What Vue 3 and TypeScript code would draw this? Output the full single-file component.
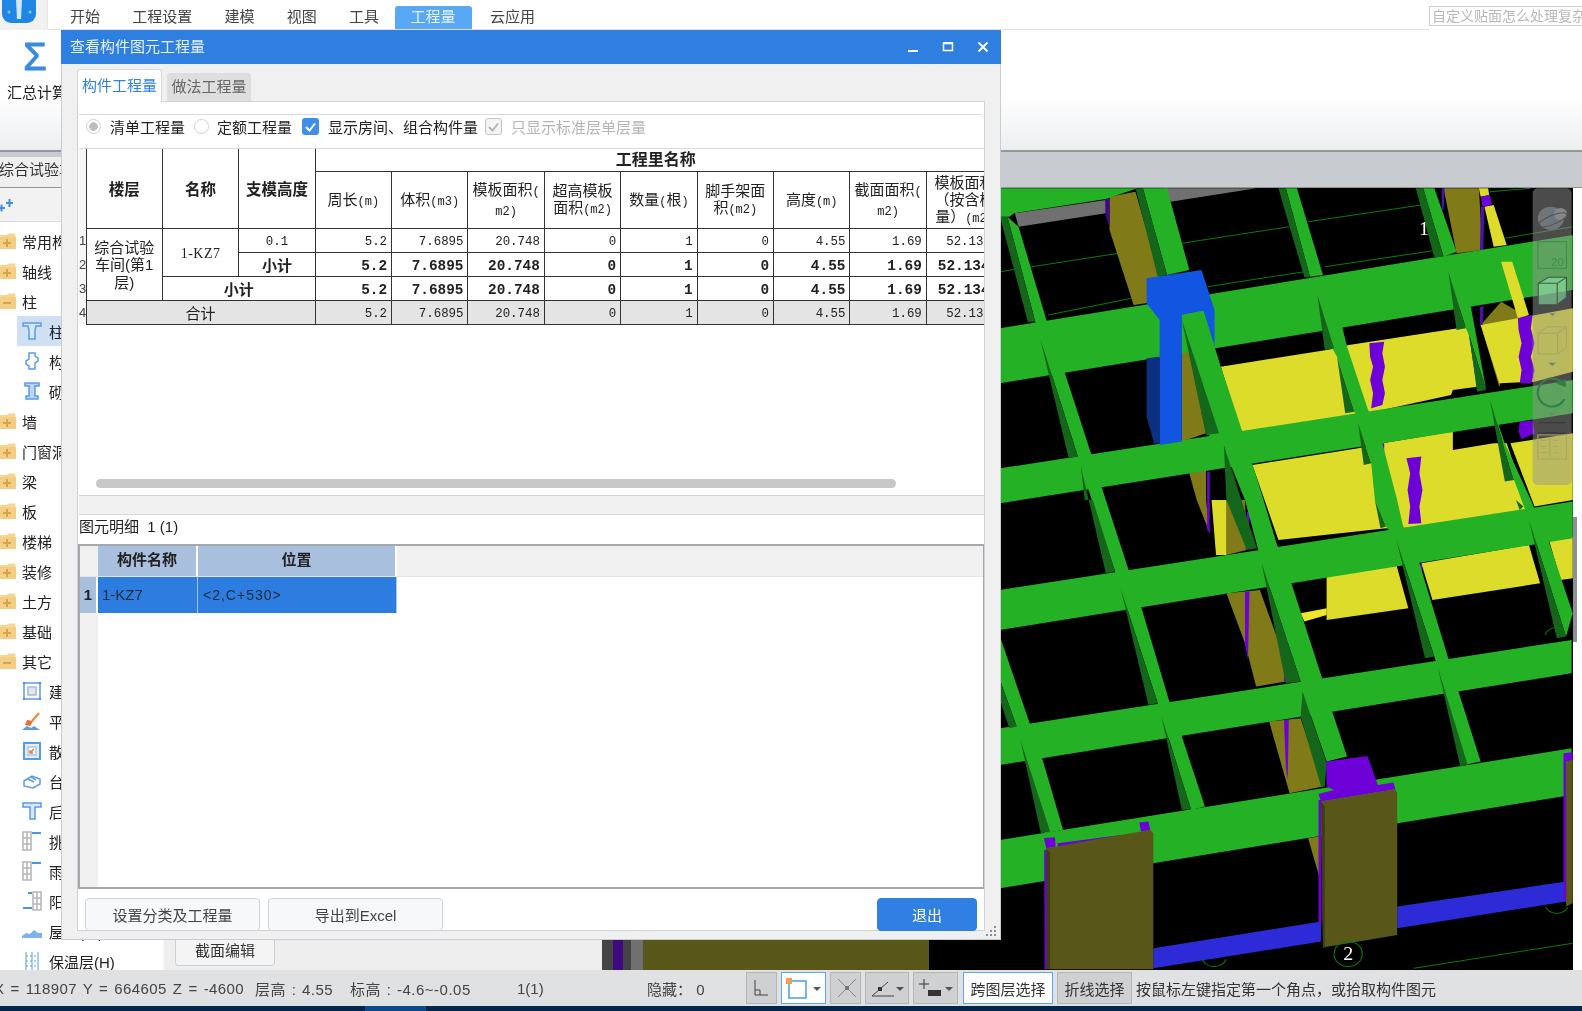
<script setup lang="ts">
type Row = { label: string; icon: string; child?: boolean; selected?: boolean }
type Poly = { fill: string; points: string }

const menus = ['开始', '工程设置', '建模', '视图', '工具', '工程量', '云应用']

const tree: Row[] = [
  { label: '常用构件类型', icon: 'plus' },
  { label: '轴线', icon: 'plus' },
  { label: '柱', icon: 'minus' },
  { label: '柱(Z)', icon: 'col', child: true, selected: true },
  { label: '构造柱(Z)', icon: 'gz', child: true },
  { label: '砌体柱(Z)', icon: 'qt', child: true },
  { label: '墙', icon: 'plus' },
  { label: '门窗洞', icon: 'plus' },
  { label: '梁', icon: 'plus' },
  { label: '板', icon: 'plus' },
  { label: '楼梯', icon: 'plus' },
  { label: '装修', icon: 'plus' },
  { label: '土方', icon: 'plus' },
  { label: '基础', icon: 'plus' },
  { label: '其它', icon: 'minus' },
  { label: '建筑面积(U)', icon: 'area', child: true },
  { label: '平整场地(V)', icon: 'shovel', child: true },
  { label: '散水(S)', icon: 'drain', child: true },
  { label: '台阶', icon: 'step', child: true },
  { label: '后浇带(JD)', icon: 'tee', child: true },
  { label: '挑檐(T)', icon: 'eave', child: true },
  { label: '雨蓬(P)', icon: 'eave', child: true },
  { label: '阳台(Y)', icon: 'balcony', child: true },
  { label: '屋面(W)', icon: 'roof', child: true },
  { label: '保温层(H)', icon: 'wall', child: true }
]

const subHeads = [
  ['周长(m)'],
  ['体积(m3)'],
  ['模板面积(', 'm2)'],
  ['超高模板', '面积(m2)'],
  ['数量(根)'],
  ['脚手架面', '积(m2)'],
  ['高度(m)'],
  ['截面面积(', 'm2)'],
  ['模板面积', '（按含模', '量）(m2)']
]
const values = ['5.2', '7.6895', '20.748', '0', '1', '0', '4.55', '1.69', '52.1344']

// latin parts of a header are drawn smaller than the chinese ones
const parts = (s: string) => s.split(/([()a-z0-9]+)/).filter(Boolean)
const isLatin = (s: string) => /^[()a-z0-9]+$/.test(s)

const GREEN = '#25b125'
const DARK = '#14661a'
const OLIVE = '#807a18'
const YELLOW = '#dedc2a'
const PURPLE = '#6e00d8'
const BROWN = '#59561a'

const p = (fill: string, points: string): Poly => ({ fill, points })

// model view, in a 2.694 x 3 scaled space (see the group transform)
const under: Poly[] = [
  p('#707070', '40,640 285,600 285,640 50,680'),
  p('#707070', '445,565 690,565 460,605'),
  p(OLIVE, '295,590 365,575 430,830 420,905 360,915 295,690'),
  p(OLIVE, '490,950 555,1300 490,1325'),
  p(OLIVE, '510,1420 555,1410 555,1500 565,1600 530,1500'),
  p(OLIVE, '1195,565 1290,565 1300,750 1230,760'),
  p(OLIVE, '1295,975 1350,905 1420,950 1345,1160'),
  p(OLIVE, '610,1500 660,1500 665,1650 610,1665'),
  p(OLIVE, '610,1780 700,1770 765,1970 770,2045 690,2060 660,1930'),
  p(OLIVE, '725,2165 810,2155 870,2360 780,2380'),
  p(OLIVE, '830,2515 860,2510 860,2630'),
  p(YELLOW, '595,1100 880,1050 905,1045 940,1035 1260,980 1285,1160 1220,1170 1215,1185 990,1240 650,1300'),
  p(YELLOW, '1295,975 1395,955 1440,1145 1345,1150'),
  p(YELLOW, '1395,955 1543,925 1543,1115 1440,1145'),
  p(YELLOW, '1305,620 1330,615 1365,735 1330,740'),
  p(YELLOW, '1290,565 1315,565 1318,585 1295,590'),
  p(YELLOW, '680,1395 965,1345 1030,1330 1220,1295 1220,1350 1330,1330 1365,1330 1425,1530 1090,1590 1040,1585 750,1620'),
  p(YELLOW, '1375,1330 1543,1300 1543,1500 1440,1520'),
  p(YELLOW, '570,1500 610,1500 610,1665 582,1665'),
  p(YELLOW, '880,1725 1068,1695 1100,1825 880,1860'),
  p(YELLOW, '1135,1690 1425,1635 1455,1750 1165,1800'),
  p(YELLOW, '1480,1625 1543,1610 1543,1735 1510,1740'),
  p('#efe62c', '810,1840 880,1825 880,1845 820,1865'),
  p('#3c0a88', '283,595 295,592 295,680 285,650'),
  p(PURPLE, '995,1030 1035,1025 1030,1060 1037,1100 1030,1140 1037,1180 1030,1215 1000,1225 1005,1180 997,1140 1005,1100 997,1070'),
  p(PURPLE, '1395,950 1435,945 1430,985 1440,1030 1430,1070 1440,1110 1432,1150 1400,1150 1405,1110 1397,1070 1405,1030 1397,990'),
  p(PURPLE, '1400,1265 1435,1262 1440,1300 1405,1318 1397,1295'),
  p(PURPLE, '1095,1375 1135,1370 1130,1420 1138,1470 1130,1520 1135,1570 1100,1572 1105,1520 1098,1470 1105,1420'),
  p(PURPLE, '1295,590 1320,585 1325,615 1300,620'),
  p('#4a12a8', '1295,620 1305,620 1302,750 1293,750'),
  p('#4a12a8', '1293,920 1303,918 1300,975 1293,975'),
  p('#4a12a8', '1190,565 1198,565 1195,630 1190,630'),
  p(PURPLE, '558,1175 585,1175 588,1190 565,1200 565,1300 557,1300'),
  p(PURPLE, '558,1415 565,1415 565,1600 558,1590'),
  p(PURPLE, '665,1535 692,1535 692,1555 672,1558 668,1650 662,1650'),
  p(PURPLE, '660,1775 672,1775 668,1980 660,1930'),
  p(PURPLE, '770,1900 798,1898 800,1918 775,1925 772,2045 765,2045'),
  p(PURPLE, '765,2160 778,2160 775,2340 770,2300'),
  p(PURPLE, '1025,1330 1035,1330 1035,1370 1028,1370'),
  p(PURPLE, '1128,1695 1137,1693 1137,1718 1130,1718')
]

const bands: Poly[] = [
  p(GREEN, '0,565 370,565 285,597 38,640 25,650 0,650'),
  p(GREEN, '0,985 1543,705 1543,870 0,1150'),
  p(GREEN, '0,1405 1543,1140 1543,1240 0,1510'),
  p(GREEN, '0,1770 1543,1505 1543,1615 0,1890'),
  p(GREEN, '0,2185 1540,1920 1540,2020 0,2295'),
  p(GREEN, '0,2520 1540,2245 1540,2385 0,2665')
]

const beams: Poly[] = [
  p(GREEN, '20,650 50,680 125,960 175,1120 245,1360 285,1500 345,1705 380,1820 455,2100 490,2210 552,2420 515,2430 425,2110 325,1765 310,1715 218,1400 210,1370 108,1015 95,965'),
  p(GREEN, '0,1910 80,2170 115,2280 170,2490 120,2500 55,2220 45,2180 0,2040'),
  p(GREEN, '385,565 450,565 510,810 450,825'),
  p(GREEN, '770,565 800,565 870,825 835,830'),
  p(GREEN, '855,885 900,880 935,1040 990,1225 1030,1330 1070,1500 1085,1575 1130,1690 1205,1965 1235,2075 1295,2285 1250,2295 1180,2005 1170,1970 1068,1620 1040,1580 1010,1500 1000,1390 965,1270 955,1235 908,1070 895,1045'),
  p(GREEN, '1140,565 1170,565 1230,755 1195,770'),
  p(GREEN, '1208,815 1250,810 1310,1170 1360,1330 1430,1500 1480,1630 1543,1840 1525,1910 1425,1560 1385,1440 1320,1200 1310,1170 1265,1010 1255,985'),
  p(DARK, '0,650 20,650 95,965 75,965'),
  p(DARK, '108,1015 210,1370 185,1375'),
  p(DARK, '218,1400 228,1500 250,1500 310,1715 285,1720'),
  p(DARK, '325,1765 425,2110 400,2115'),
  p(DARK, '435,2150 515,2428 490,2430'),
  p(DARK, '0,2040 45,2180 25,2185 0,2100'),
  p(DARK, '55,2220 135,2495 110,2500'),
  p(DARK, '365,565 385,565 450,825 425,830'),
  p(DARK, '750,565 770,565 835,830 820,832'),
  p(DARK, '855,885 900,1045 875,1050'),
  p(DARK, '908,1070 955,1235 930,1240'),
  p(DARK, '965,1270 1000,1390 980,1395'),
  p(DARK, '1010,1500 1040,1580 1025,1585'),
  p(DARK, '1068,1620 1170,1970 1145,1975'),
  p(DARK, '1180,2005 1260,2295 1240,2300'),
  p(DARK, '1120,565 1140,565 1195,770 1170,772'),
  p(DARK, '1208,815 1255,985 1230,990'),
  p(DARK, '1265,1010 1310,1170 1285,1175'),
  p(DARK, '1320,1200 1385,1440 1360,1445'),
  p(DARK, '1390,1500 1410,1520 1400,1530'),
  p(DARK, '1425,1560 1525,1910 1500,1915'),
  p(YELLOW, '1350,785 1380,785 1425,945 1395,955')
]

const front: Poly[] = [
  p('#0c2f80', '395,1075 430,1070 430,1330 415,1330 395,1250'),
  p('#1155e0', '395,835 543,810 578,930 578,1040 548,932 490,945 490,1325 430,1335 430,960 395,910'),
  p(GREEN, '490,945 548,932 595,1100 650,1285 710,1500 745,1630 785,1750 865,2025 895,2135 935,2270 880,2285 815,2075 810,2045 705,1690 660,1500 600,1335 555,1300 490,950'),
  p(DARK, '490,960 590,1300 555,1305'),
  p(DARK, '603,1335 692,1645 665,1650 610,1500'),
  p(DARK, '705,1690 810,2045 770,2050'),
  p(DARK, '815,2075 880,2290 875,2360 865,2360 810,2150'),
  p('#2d2bd8', '413,2845 865,2765 865,2825 413,2905'),
  p('#2d2bd8', '1070,2720 1525,2645 1525,2705 1070,2785'),
  p(PURPLE, '878,2285 990,2268 1018,2355 1060,2348 1065,2368 865,2405 858,2382 900,2370 880,2360'),
  p(PURPLE, '118,2515 148,2512 150,2540 125,2545'),
  p(PURPLE, '155,2530 325,2505 325,2525 158,2555'),
  p(PURPLE, '375,2468 400,2465 405,2490 380,2495'),
  p(PURPLE, '1518,2260 1543,2257 1543,2280 1525,2285 1525,2700 1518,2700'),
  p(PURPLE, '119,2550 128,2550 128,2908 120,2908'),
  p(PURPLE, '858,2400 866,2400 866,2770 858,2770'),
  p(BROWN, '125,2545 325,2505 405,2490 413,2500 413,2908 135,2908'),
  p('#3f3d14', '125,2545 135,2560 135,2908 125,2908'),
  p(BROWN, '865,2405 1065,2368 1070,2380 1070,2805 870,2843'),
  p('#3f3d14', '865,2405 875,2420 875,2842 870,2843'),
  p(BROWN, '1525,2285 1543,2280 1543,2710 1525,2720')
]

const greenLines = [
  '0,815 320,760', '130,945 355,895', '490,730 780,680', '560,860 820,815',
  '830,665 1135,615', '875,800 1180,750', '1360,715 1543,680', '1320,575 1430,565',
  '1115,2905 1543,2830'
]
</script>

<template>
  <div class="app">
    <header class="topbar">
      <div class="logo-cell">
        <svg class="logo" width="38" height="24" viewBox="0 0 38 24">
          <path d="M2 0h34v14a9 9 0 0 1-9 9H11a9 9 0 0 1-9-9z" fill="#1f86e6" />
          <path d="M16 0h6l-1 19h-4z" fill="#cfe6fb" />
          <circle cx="9" cy="12" r="1.5" fill="#8cc6f7" />
          <circle cx="30" cy="12" r="1.5" fill="#8cc6f7" />
        </svg>
      </div>
      <nav class="menu">
        <span v-for="m in menus" :key="m" class="menu-item" :class="{ active: m === '工程量' }">{{ m }}</span>
      </nav>
      <div class="search">自定义贴面怎么处理复杂</div>
    </header>

    <section class="ribbon">
      <div class="sum">
        <span class="sigma">Σ</span>
        <span class="sum-label">汇总计算</span>
      </div>
    </section>

    <section class="tabstrip">
      <span class="doc-tab">综合试验车间</span>
    </section>

    <main class="workspace">
      <aside class="side">
        <div class="side-tools">
          <svg width="18" height="14" viewBox="0 0 18 14">
            <path d="M0 10h7M3.500 6.500v7M8 5h7M11.500 1v8" stroke="#3f8fe0" stroke-width="2" />
          </svg>
        </div>
        <ul class="tree">
          <li v-for="r in tree" :key="r.label" class="tree-row" :class="{ child: r.child, selected: r.selected }">
            <svg v-if="!r.child" class="folder" width="18" height="18" viewBox="0 0 18 18">
              <path d="M-2 3h9l1.500-1.500h6a1 1 0 0 1 1 1V16H-2z" fill="#f6d693" />
              <path d="M-2 5h18v12H-2z" fill="#f3cf86" />
              <path d="M3 11h8" stroke="#dba14c" stroke-width="2" />
              <path v-if="r.icon === 'plus'" d="M7 7v8" stroke="#dba14c" stroke-width="2" />
            </svg>
            <svg v-else class="node" width="20" height="20" viewBox="0 0 20 20" fill="none" stroke="#5a9be6" stroke-width="1.500">
              <template v-if="r.icon === 'col'">
                <path d="M1 2h18v3h-5l-1 4v9H7V9L6 5H1z" fill="#d8e8fa" />
              </template>
              <template v-else-if="r.icon === 'gz'">
                <path d="M7 2h6v3l3 2v3l-3 2v6H7v-3L4 13v-3l3-2z" />
              </template>
              <template v-else-if="r.icon === 'qt'">
                <path d="M3 2h14v3h-4v10h3v3H4v-3h3V5H3z" fill="#bcd6f4" />
              </template>
              <template v-else-if="r.icon === 'area'">
                <path d="M2 2h16v16H2z" />
                <path d="M6 6h8v8H6z" fill="#dfe6f2" stroke="#a9b9d4" />
                <path d="M1 1h2v2H1zM17 1h2v2h-2zM1 17h2v2H1zM17 17h2v2h-2z" fill="#3f8fe0" stroke="none" />
              </template>
              <template v-else-if="r.icon === 'shovel'">
                <path d="M17 2l-7 8" stroke="#e88a3c" stroke-width="2" />
                <path d="M5 9l6 1-3 5-5-1z" fill="#e8702c" stroke="none" />
                <path d="M0 19l5-4 4 2 3-2 6 4z" fill="#5a9be6" stroke="none" />
              </template>
              <template v-else-if="r.icon === 'drain'">
                <path d="M2 2h16v16H2z" fill="#e4effb" stroke-width="2" />
                <path d="M6 6h8v8H6z" fill="#fff" stroke="#a9c6ea" />
                <path d="M12 8l-4 4M8 9v3h3" stroke="#e8803c" />
              </template>
              <template v-else-if="r.icon === 'step'">
                <path d="M2 10l8-5 8 3v5l-7 4-9-2z" />
                <path d="M6 8l6 3M9 6l5 3" />
              </template>
              <template v-else-if="r.icon === 'tee'">
                <path d="M1 2h18v4h-6v12H8V6H1z" fill="#d8e8fa" stroke-width="1.500" />
              </template>
              <template v-else-if="r.icon === 'eave'">
                <path d="M1 1h8v18H1zM1 7h8M1 13h8M5 1v18" stroke="#b5b5b5" />
                <path d="M10 2h9" stroke="#4c93e6" stroke-width="2" />
              </template>
              <template v-else-if="r.icon === 'balcony'">
                <path d="M11 1h8v18h-8zM11 7h8M11 13h8M15 1v18" stroke="#b5b5b5" />
                <path d="M1 17h9M6 2h4" stroke="#4c93e6" stroke-width="2" />
              </template>
              <template v-else-if="r.icon === 'roof'">
                <path d="M0 15l4-3 4 1 4-4 4 3 4 0v5H0z" fill="#7fb2ec" stroke="none" />
              </template>
              <template v-else>
                <path d="M4 1v18M10 1v18M16 1v18" stroke-width="1" />
                <path d="M4 5h12M4 10h12M4 15h12" stroke-width="1" stroke-dasharray="2 2" />
              </template>
            </svg>
            <span class="tree-label">{{ r.label }}</span>
          </li>
        </ul>
      </aside>

      <div class="middle">
        <div class="edit-tab">截面编辑</div>
      </div>

      <div class="canvas">
        <svg class="scene" width="971" height="782" viewBox="602 188 971 782">
          <rect x="602" y="188" width="971" height="782" fill="#000" />
          <rect x="602" y="940" width="11" height="30" fill="#444" />
          <rect x="613" y="940" width="10" height="30" fill="#3f0a80" />
          <rect x="623" y="940" width="8" height="30" fill="#444" />
          <rect x="631" y="940" width="12" height="30" fill="#707070" />
          <rect x="643" y="940" width="286" height="30" fill="#59561a" />
          <g transform="translate(1000 0) scale(0.3712 0.3333)">
            <polyline v-for="l in greenLines" :key="l" :points="l" stroke="#0a7a0a" stroke-width="3" fill="none" />
            <polygon v-for="(s, i) in under" :key="'u' + i" :points="s.points" :fill="s.fill" />
            <polygon v-for="(s, i) in bands" :key="'b' + i" :points="s.points" :fill="s.fill" />
            <polygon v-for="(s, i) in beams" :key="'m' + i" :points="s.points" :fill="s.fill" />
            <polygon v-for="(s, i) in front" :key="'f' + i" :points="s.points" :fill="s.fill" />
            <circle cx="938" cy="2862" r="38" stroke="#0a7a0a" stroke-width="3" fill="none" />
            <text x="938" y="2880" class="axis" text-anchor="middle">2</text>
            <text x="1142" y="705" class="axis" text-anchor="middle">1</text>
            <path d="M545 2878a34 34 0 0 0 64 0" stroke="#0a7a0a" stroke-width="3" fill="none" />
            <path d="M1470 2722a34 34 0 0 0 60 0" stroke="#0a7a0a" stroke-width="3" fill="none" />
            <path d="M1468 1905a32 32 0 0 1 50 -15" stroke="#0a7a0a" stroke-width="3" fill="none" />
            <!-- view tools floating over the model -->
            <rect x="1435" y="565" width="105" height="890" rx="14" fill="rgba(150,150,150,.5)" />
            <circle cx="1484" cy="655" r="35" fill="#70757a" />
            <circle cx="1510" cy="642" r="18" fill="#85888a" />
            <ellipse cx="1488" cy="660" rx="42" ry="13" transform="rotate(-25 1488 660)" fill="none" stroke="#505254" stroke-width="3" />
            <rect x="1449" y="725" width="77" height="80" fill="none" stroke="#3b8f50" stroke-width="3" />
            <text x="1502" y="798" class="axis-sm" text-anchor="middle">20</text>
            <path d="M1450 850l28-18h48v60l-25 22h-51z" fill="rgba(140,235,170,.55)" stroke="#40584a" stroke-width="3" />
            <path d="M1450 850h51v64M1501 850l25-18" fill="none" stroke="#40584a" stroke-width="3" />
            <path d="M1450 1000l24-20h52v62l-24 20h-52zM1450 1000h52v62M1502 1000l24-20" fill="none" stroke="#a8a860" stroke-width="3" />
            <path d="M1478 1088h20l-10 10zM1478 1238h20l-10 10zM1480 940h16l-8 8z" fill="#6a8a70" />
            <path d="M1515 1150A38 42 0 1 0 1520 1198" fill="none" stroke="#2f8048" stroke-width="6" />
            <path d="M1498 1150l26 -12v24z" fill="#2f8048" />
            <path d="M1450 1268h74M1450 1300h74" stroke="#3a3a3a" stroke-width="4" />
            <rect x="1449" y="1305" width="77" height="72" fill="none" stroke="#a8a860" stroke-width="3" />
            <path d="M1458 1322h14M1458 1340h14M1458 1358h14M1490 1322h14M1490 1340h14M1490 1358h14M1481 1312v60" stroke="#a8a860" stroke-width="3" fill="none" />
          </g>
        </svg>
      </div>

      <div class="rail">
        <div class="rail-thumb"></div>
      </div>
    </main>

    <footer class="status">
      <span class="st st-coord">X = 118907 Y = 664605 Z = -4600</span>
      <span class="st st-floor">层高 : 4.55</span>
      <span class="st st-level">标高 : -4.6~-0.05</span>
      <span class="st st-count">1(1)</span>
      <span class="st st-hide">隐藏： 0</span>
      <div class="tools">
        <button class="tool t1">
          <svg width="20" height="20" viewBox="0 0 20 20" fill="none" stroke="#444"><path d="M4 2v15h13" /><path d="M4 12h5v5" /></svg>
        </button>
        <button class="tool t2 on">
          <svg width="22" height="24" viewBox="0 0 22 24" fill="none"><path d="M3 5h17v17H3z" stroke="#4c9bf0" stroke-width="1.500" /><path d="M0 2h6v6H0z" fill="#f0a050" /></svg>
          <i class="caret"></i>
        </button>
        <button class="tool t3">
          <svg width="24" height="24" viewBox="0 0 24 24" fill="none" stroke="#888"><path d="M3 3l18 18M21 3L3 21" /><path d="M10 10h4v4h-4z" fill="#777" stroke="none" /></svg>
        </button>
        <button class="tool t4">
          <svg width="24" height="20" viewBox="0 0 24 20" fill="none" stroke="#444"><path d="M2 18h22M2 18L18 4" /><path d="M8 9h4v4H8z" fill="#333" stroke="none" /></svg>
          <i class="caret"></i>
        </button>
        <button class="tool t5">
          <svg width="24" height="22" viewBox="0 0 24 22" fill="none"><path d="M6 2v10M1 7h10" stroke="#333" /><path d="M10 13h13v6H10z" fill="#333" /></svg>
          <i class="caret"></i>
        </button>
        <button class="tool t6 on">跨图层选择</button>
        <button class="tool t7">折线选择</button>
      </div>
      <span class="st st-hint">按鼠标左键指定第一个角点，或拾取构件图元</span>
    </footer>
    <div class="taskbar"><i class="task-on"></i></div>

    <!-- floating window -->
    <div class="dialog">
      <div class="dlg-title">
        <span class="dlg-name">查看构件图元工程量</span>
        <div class="dlg-btns">
          <svg width="12" height="12" viewBox="0 0 12 12"><path d="M1 10h10" stroke="#fff" stroke-width="2" /></svg>
          <svg width="12" height="12" viewBox="0 0 12 12" fill="none"><path d="M1.500 2.500h9v7h-9z" stroke="#fff" stroke-width="1.500" /><path d="M1 2h10" stroke="#fff" stroke-width="2" /></svg>
          <svg width="12" height="12" viewBox="0 0 12 12"><path d="M1.500 1.500l9 9M10.500 1.500l-9 9" stroke="#fff" stroke-width="1.800" /></svg>
        </div>
      </div>

      <div class="dlg-tabs">
        <span class="dlg-tab active">构件工程量</span>
        <span class="dlg-tab">做法工程量</span>
      </div>

      <div class="dlg-panel">
        <div class="options">
          <span class="radio checked"></span><span class="opt opt1">清单工程量</span>
          <span class="radio"></span><span class="opt opt2">定额工程量</span>
          <span class="check"><svg width="17" height="17" viewBox="0 0 17 17"><path d="M4 9l3.500 3.500L13 5.500" stroke="#fff" stroke-width="2" fill="none" /></svg></span>
          <span class="opt opt3">显示房间、组合构件量</span>
          <span class="check off"><svg width="17" height="17" viewBox="0 0 17 17"><path d="M4 9l3.500 3.500L13 5.500" stroke="#b5b5b5" stroke-width="2" fill="none" /></svg></span>
          <span class="opt muted">只显示标准层单层量</span>
        </div>

        <div class="sum-grid">
          <table class="qty">
            <colgroup>
              <col class="c-no" />
              <col v-for="n in 12" :key="n" class="c-val" />
            </colgroup>
            <thead>
              <tr class="h1">
                <th class="no" rowspan="2"></th>
                <th rowspan="2">楼层</th>
                <th rowspan="2">名称</th>
                <th rowspan="2">支模高度</th>
                <th colspan="9" class="h-group"><span class="h-group-text">工程里名称</span></th>
              </tr>
              <tr class="h2">
                <th v-for="(h, i) in subHeads" :key="i" class="sub">
                  <template v-for="(line, j) in h" :key="j">
                    <br v-if="j" />
                    <span v-for="(t, k) in parts(line)" :key="k" :class="{ unit: isLatin(t) }">{{ t }}</span>
                  </template>
                </th>
              </tr>
            </thead>
            <tbody>
              <tr>
                <td class="no">1</td>
                <td rowspan="3" class="floor">综合试验<br />车间(第1<br />层)</td>
                <td rowspan="2" class="name">1-KZ7</td>
                <td class="mid mono">0.1</td>
                <td v-for="(v, i) in values" :key="i" class="num">{{ v }}</td>
              </tr>
              <tr class="bold">
                <td class="no">2</td>
                <td class="mid">小计</td>
                <td v-for="(v, i) in values" :key="i" class="num">{{ v }}</td>
              </tr>
              <tr class="bold">
                <td class="no">3</td>
                <td colspan="2" class="mid">小计</td>
                <td v-for="(v, i) in values" :key="i" class="num">{{ v }}</td>
              </tr>
              <tr class="total">
                <td class="no">4</td>
                <td colspan="3" class="mid">合计</td>
                <td v-for="(v, i) in values" :key="i" class="num">{{ v }}</td>
              </tr>
            </tbody>
          </table>
          <div class="hscroll"><div class="hscroll-thumb"></div></div>
        </div>

        <div class="gap"></div>

        <div class="detail">
          <div class="detail-title">图元明细&nbsp;&nbsp;1 (1)</div>
          <div class="detail-grid">
            <div class="dg-head">
              <span class="dg-corner"></span>
              <span class="dg-h w1">构件名称</span>
              <span class="dg-h w2">位置</span>
            </div>
            <div class="dg-row">
              <span class="dg-no">1</span>
              <span class="dg-c w1">1-KZ7</span>
              <span class="dg-c w2 pos">&lt;2,C+530&gt;</span>
            </div>
            <div class="dg-rest"></div>
          </div>
          <div class="actions">
            <button class="btn">设置分类及工程量</button>
            <button class="btn">导出到Excel</button>
            <button class="btn primary">退出</button>
          </div>
        </div>
      </div>
      <svg class="grip" width="10" height="10" viewBox="0 0 10 10" fill="#8a8f96">
        <path d="M8 0h2v2H8zM4 4h2v2H4zM8 4h2v2H8zM0 8h2v2H0zM4 8h2v2H4zM8 8h2v2H8z" />
      </svg>
    </div>
  </div>
</template>

<style>
html,
body {
  margin: 0;
  background: #fff;
}
</style>

<style scoped>
.app {
  position: relative;
  width: 1582px;
  height: 1011px;
  overflow: hidden;
  display: flex;
  flex-direction: column;
  font-family: 'Liberation Sans', 'Noto Sans CJK SC', sans-serif;
  font-size: 15px;
  color: #333;
  background: #fff;
  filter: blur(0.5px);
}

.topbar {
  height: 30px;
  display: flex;
  flex-shrink: 0;
  background: #fff;
}

.logo-cell {
  width: 48px;
  background: #f1f1f1;
}

.logo {
  display: block;
}

.menu {
  flex: 1;
  display: flex;
  padding-left: 6px;
  border-bottom: 1px solid #e2e2e2;
  box-shadow: -1px 0 0 #e8e8e8;
}

.menu-item {
  padding: 6px 16.1px 0;
  line-height: 22px;
  white-space: nowrap;
  color: #444;
}

.menu-item.active {
  align-self: flex-end;
  height: 23px;
  box-sizing: border-box;
  padding: 0 15.5px;
  margin-right: 2px;
  background: #59a8f6;
  border-radius: 3px 3px 0 0;
  color: #e6f2ff;
  width: 77px;
}

.search {
  align-self: flex-start;
  width: 153px;
  height: 20px;
  margin-top: 6px;
  border: 1px solid #ccc;
  border-right: 0;
  box-sizing: border-box;
  font-size: 14px;
  line-height: 18px;
  padding-left: 2px;
  color: #b8b8b8;
  white-space: nowrap;
  overflow: hidden;
}

.ribbon {
  height: 122px;
  flex-shrink: 0;
  box-sizing: border-box;
  background: linear-gradient(#fff 0, #fff 55%, #eceef0 100%);
  border-bottom: 2px solid #94989c;
}

.sum {
  display: flex;
  flex-direction: column;
  padding-left: 7px;
  width: 54px;
  overflow: hidden;
  align-items: flex-start;
}

.sigma {
  width: 54px;
  text-align: center;
  margin-left: 1px;
  font: 38px/44px 'Liberation Sans', sans-serif;
  -webkit-text-stroke: 1px #3a8be0;
  color: #3a8be0;
  margin-top: 5px;
}

.sum-label {
  white-space: nowrap;
  margin-top: 2px;
  color: #222;
}

.tabstrip {
  height: 36px;
  flex-shrink: 0;
  box-sizing: border-box;
  background: #c8ccd0;
  border-bottom: 1px solid #8f9396;
  padding-top: 5px;
}

.doc-tab {
  display: block;
  width: 162px;
  height: 30px;
  box-sizing: border-box;
  padding-left: 0;
  text-indent: -1px;
  line-height: 26px;
  background: #efefef;
  white-space: nowrap;
  overflow: hidden;
}

.workspace {
  flex: 1;
  min-height: 0;
  display: flex;
}

.side {
  width: 162px;
  flex-shrink: 0;
  background: #fff;
  overflow: hidden;
}

.side-tools {
  height: 34px;
  box-sizing: border-box;
  background: #f2f2f2;
  border-bottom: 1px solid #ddd;
  padding: 10px 0 0;
}

.side-tools svg {
  display: block;
  margin-left: -2px;
}

.tree {
  list-style: none;
  margin: 4px 0 0;
  padding: 0;
}

.tree-row {
  height: 30px;
  display: flex;
  align-items: center;
  white-space: nowrap;
  color: #222;
}

.folder {
  flex-shrink: 0;
  margin-right: 4px;
}

.node {
  flex-shrink: 0;
  margin-left: 22px;
  margin-right: 7px;
}

.tree-row.selected {
  background: linear-gradient(90deg, #fff 17px, #cfe0f5 17px);
}

.middle {
  width: 440px;
  flex-shrink: 0;
  box-sizing: border-box;
  background: #eeeeee;
  border-left: 2px solid #fafafa;
  padding-left: 11px;
  display: flex;
  align-items: flex-end;
}

.edit-tab {
  width: 100px;
  height: 30px;
  margin-bottom: 4px;
  box-sizing: border-box;
  text-align: center;
  line-height: 30px;
  background: #f4f4f4;
  border: 1px solid #ccd0d6;
  border-top: 0;
  border-radius: 0 0 4px 4px;
}

.canvas {
  width: 971px;
  flex-shrink: 0;
  overflow: hidden;
}

.scene {
  display: block;
}

.axis {
  font: 54px 'Liberation Serif', serif;
  fill: #fff;
}

.axis-sm {
  font: 30px 'Liberation Sans', sans-serif;
  fill: #3b8f50;
}

.rail {
  flex: 1;
  background: #fff;
  padding-top: 329px;
}

.rail-thumb {
  width: 4px;
  height: 125px;
  background: #8c9094;
}

.status {
  height: 36px;
  flex-shrink: 0;
  display: flex;
  align-items: center;
  background: #e0e1e3;
  color: #444;
  overflow: hidden;
}

.st {
  flex-shrink: 0;
  white-space: nowrap;
}

.st-coord {
  width: 261px;
  margin-left: -6px;
  letter-spacing: 0.4px;
  word-spacing: 1.5px;
}

.st-floor {
  width: 95px;
  letter-spacing: 0.5px;
  word-spacing: 1px;
}

.st-level {
  width: 167px;
  letter-spacing: 0.5px;
  word-spacing: 1px;
}

.st-count {
  width: 130px;
}

.st-hide {
  width: 99px;
}

.st-hint {
  margin-left: 4px;
  color: #333;
}

.tools {
  display: flex;
  gap: 4px;
  flex-shrink: 0;
}

.tool {
  position: relative;
  height: 32px;
  box-sizing: border-box;
  padding: 0 0 0 4px;
  display: flex;
  align-items: center;
  background: #cfd0d2;
  border: 1px solid #b4b5b7;
  font: 15px 'Liberation Sans', 'Noto Sans CJK SC', sans-serif;
  color: #333;
}

.tool.on {
  background: #fff;
  border: 1px solid #59a8f6;
}

.t1 { width: 31px; }
.t2 { width: 45px; }
.t3 { width: 31px; }
.t4 { width: 44px; }
.t5 { width: 45px; }

.t6 {
  width: 90px;
  margin-left: 1px;
  justify-content: center;
  padding: 0;
}

.t7 {
  width: 75px;
  justify-content: center;
  padding: 0;
}

.caret {
  position: absolute;
  right: 4px;
  top: 14px;
  border: 4px solid transparent;
  border-top: 4px solid #555;
  border-bottom: 0;
}

.taskbar {
  height: 5px;
  flex-shrink: 0;
  background: #03264a;
  padding-left: 365px;
}

.task-on {
  display: block;
  width: 61px;
  height: 5px;
  background: #0a4a8a;
}

.dialog {
  position: absolute;
  left: 61px;
  top: 30px;
  width: 940px;
  height: 910px;
  box-sizing: border-box;
  display: flex;
  flex-direction: column;
  background: #f0f0f0;
  border: 1px solid #c9ccd1;
  border-top: 0;
}

.dlg-title {
  height: 34px;
  flex-shrink: 0;
  margin: 0 -1px;
  display: flex;
  align-items: center;
  justify-content: space-between;
  padding-left: 9px;
  background: #2e7fe0;
  color: #e8f2fd;
}

.dlg-name {
  margin-bottom: 3px;
}

.dlg-btns {
  display: flex;
  gap: 23px;
  padding-right: 12px;
}

.dlg-btns svg {
  display: block;
}

.dlg-tabs {
  height: 37px;
  flex-shrink: 0;
  box-sizing: border-box;
  display: flex;
  align-items: flex-end;
  gap: 5px;
  padding-left: 15px;
}

.dlg-tab {
  width: 84px;
  height: 28px;
  text-align: center;
  line-height: 28px;
  background: #dedede;
  color: #666;
  border-radius: 3px 3px 0 0;
}

.dlg-tab.active {
  width: 85px;
  box-sizing: border-box;
  height: 33px;
  line-height: 32px;
  margin-bottom: -1px;
  position: relative;
  z-index: 1;
  background: #fff;
  color: #2e82e4;
  border: 1px solid #d6d8dc;
  border-bottom: 0;
}

.dlg-panel {
  flex: 1;
  min-height: 0;
  margin: 0 15px 8px 15px;
  box-sizing: border-box;
  display: flex;
  flex-direction: column;
  background: #fff;
  border: 1px solid #cfd2d6;
  padding: 12px 0 0 1px;
}

.options {
  height: 35px;
  flex-shrink: 0;
  box-sizing: border-box;
  display: flex;
  align-items: center;
  padding: 0 0 11px 7px;
  border: 1px solid #d8dade;
  border-width: 1px 0;
  border-top-right-radius: 4px;
  color: #222;
}

.radio {
  width: 15px;
  height: 15px;
  box-sizing: border-box;
  border: 1px solid #d0d0d0;
  border-radius: 50%;
  background: #fff;
  flex-shrink: 0;
}

.radio.checked {
  background: radial-gradient(circle, #bdbdbd 0 4px, #fff 4.500px);
}

.opt {
  white-space: nowrap;
}

.opt1 {
  margin: 0 9px;
}

.opt2 {
  margin: 0 10px 0 8px;
}

.opt3 {
  margin: 0 7px 0 9px;
}

.muted {
  margin-left: 9px;
  color: #b5b5b5;
}

.check {
  width: 17px;
  height: 17px;
  border-radius: 3px;
  background: #3f8fe8;
  flex-shrink: 0;
}

.check svg {
  display: block;
}

.check.off {
  box-sizing: border-box;
  background: #f4f4f4;
  border: 1px solid #c4c4c4;
}

.check.off svg {
  margin: -1px;
}

.sum-grid {
  position: relative;
  height: 346px;
  flex-shrink: 0;
  overflow: hidden;
  border-bottom: 1px solid #d0d2d6;
}

.qty {
  border-collapse: collapse;
  table-layout: fixed;
  width: 923.8px;
  color: #222;
}

.c-no {
  width: 7px;
}

.c-val {
  width: 76.4px;
}

.qty th,
.qty td {
  border: 1.5px solid #333;
  padding: 0;
  box-sizing: border-box;
}

.qty th:first-child,
.qty td:first-child {
  border-width: 0 1.5px 0 0;
}

.qty tr:first-child th {
  border-top: 0;
}

.h1 {
  height: 22px;
}

.h2 {
  height: 57px;
}

.qty th {
  font-size: 15.5px;
  font-weight: 700;
  overflow: hidden;
  white-space: nowrap;
}

.qty th.no,
.qty td.no {
  background: #f6f6f6;
  font-size: 13px;
  font-weight: 400;
  text-align: left;
  overflow: hidden;
  color: #444;
}

.h-group {
  text-align: left;
}

.h-group-text {
  display: block;
  width: 680px;
  text-align: center;
  font-size: 16px;
  line-height: 21px;
}

.qty th.sub {
  font-size: 15px;
  font-weight: 400;
  line-height: 17px;
  overflow: hidden;
  padding-top: 2px;
}

.unit {
  font-family: 'Liberation Mono', monospace;
  font-size: 12px;
}

.qty tbody tr {
  height: 24px;
}

.floor {
  font-size: 15px;
  line-height: 17.5px;
  text-align: center;
  padding-top: 2px !important;
}

.name {
  font: 14px 'Liberation Serif', serif;
  letter-spacing: 0.5px;
  text-align: center;
  padding-top: 3px !important;
}

.mid {
  text-align: center;
}

.mono {
  font-family: 'Liberation Mono', monospace;
  font-size: 12.4px;
  padding-top: 3px !important;
}

.num {
  font-family: 'Liberation Mono', monospace;
  font-size: 12.4px;
  text-align: right;
  padding: 3px 4px 0 0 !important;
  white-space: nowrap;
  overflow: hidden;
}

.bold td {
  font-weight: 700;
}

.bold .num {
  font-size: 14.4px;
}

.total td:not(.no) {
  background: #e4e4e4;
}

.hscroll {
  position: absolute;
  left: 17px;
  top: 330px;
  width: 800px;
  height: 9px;
}

.hscroll-thumb {
  height: 9px;
  border-radius: 5px;
  background: #c8c8c8;
}

.gap {
  height: 18px;
  flex-shrink: 0;
  background: #f0f0f0;
}

.detail {
  flex: 1;
  min-height: 0;
  display: flex;
  flex-direction: column;
  border-top: 1px solid #d8dade;
}

.detail-title {
  height: 29px;
  flex-shrink: 0;
  line-height: 23px;
  color: #222;
  white-space: nowrap;
}

.detail-grid {
  height: 345px;
  flex-shrink: 0;
  box-sizing: border-box;
  margin-left: -1px;
  display: flex;
  flex-direction: column;
  border: 2px solid #a5a8ac;
  border-right-width: 1px;
}

.dg-head {
  height: 30px;
  flex-shrink: 0;
  display: flex;
  background: #f0f0f0;
  border-bottom: 1px solid #e4e4e4;
}

.dg-corner {
  width: 18px;
  flex-shrink: 0;
}

.dg-h {
  display: block;
  text-align: center;
  line-height: 28px;
  background: #a9bfde;
  font-weight: 700;
  border-right: 2px solid #fff;
  box-sizing: border-box;
  color: #222;
}

.w1 {
  width: 100px;
  flex-shrink: 0;
}

.w2 {
  width: 199px;
  flex-shrink: 0;
}

.dg-row {
  height: 36px;
  flex-shrink: 0;
  display: flex;
}

.dg-no {
  width: 16px;
  margin: 0 2px 0 0;
  flex-shrink: 0;
  text-align: center;
  line-height: 36px;
  font-weight: 700;
  background: #a9bfde;
  color: #222;
}

.dg-c {
  box-sizing: border-box;
  line-height: 36px;
  padding-left: 4px;
  background: #2d7de0;
  border-right: 1px solid #a8c8f0;
  color: #1c2a3a;
}

.pos {
  padding-left: 5px;
  letter-spacing: 1px;
  font-size: 14px;
}

.dg-rest {
  flex: 1;
  background: linear-gradient(90deg, #f0f0f0 18px, #fff 18px);
}

.actions {
  flex: 1;
  display: flex;
  align-items: flex-start;
  padding: 9px 7px 0 6px;
  gap: 8px;
}

.btn {
  width: 175px;
  height: 33px;
  border: 1px solid #d0d4da;
  border-radius: 4px;
  background: #f7f8fa;
  font: 15px 'Liberation Sans', 'Noto Sans CJK SC', sans-serif;
  color: #444;
}

.btn.primary {
  width: 100px;
  margin-left: auto;
  background: #2f80e2;
  border-color: #2f80e2;
  color: #fff;
}

.grip {
  position: absolute;
  right: 4px;
  bottom: 3px;
}
</style>
